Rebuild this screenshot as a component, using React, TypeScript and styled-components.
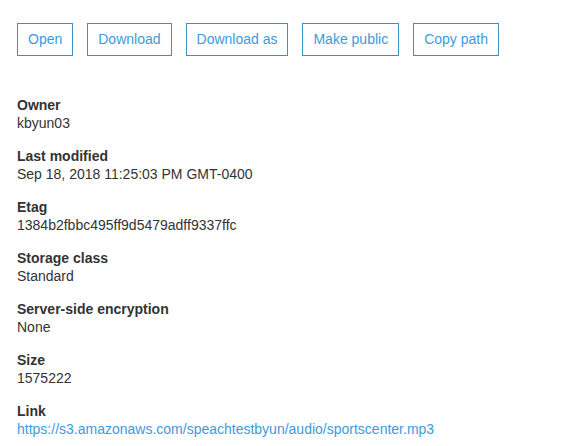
import React from "react";
import styled, { createGlobalStyle } from "styled-components";

const Global = createGlobalStyle`
  html, body { margin: 0; padding: 0; background: #fff; }
  body { font-family: "Liberation Sans", Arial, sans-serif; font-size: 14px; color: #333; }
`;

const Page = styled.div`
  padding: 23px 17px 0 17px;
`;

const Toolbar = styled.div`
  display: flex;
  gap: 14px;
  margin-bottom: 40px;
`;

const Button = styled.button`
  font-family: "Liberation Sans", Arial, sans-serif;
  font-size: 14px;
  line-height: 19px;
  padding: 6px 10px;
  background: #fff;
  color: #3d9ade;
  border: 1px solid #3a90c9;
  border-radius: 0;
  cursor: pointer;
`;

const Details = styled.dl`
  margin: 0;
`;

const Item = styled.div`
  margin-bottom: 14px;
`;

const Label = styled.dt`
  font-weight: bold;
  line-height: 18px;
  color: #333;
`;

const Value = styled.dd`
  margin: 0;
  line-height: 19px;
  color: #333;
`;

const Link = styled.a`
  color: #3d9ade;
  text-decoration: none;
`;

const buttons = ["Open", "Download", "Download as", "Make public", "Copy path"];

const items: { label: string; value: string; link?: boolean }[] = [
  { label: "Owner", value: "kbyun03" },
  { label: "Last modified", value: "Sep 18, 2018 11:25:03 PM GMT-0400" },
  { label: "Etag", value: "1384b2fbbc495ff9d5479adff9337ffc" },
  { label: "Storage class", value: "Standard" },
  { label: "Server-side encryption", value: "None" },
  { label: "Size", value: "1575222" },
  {
    label: "Link",
    value: "https://s3.amazonaws.com/speachtestbyun/audio/sportscenter.mp3",
    link: true,
  },
];

export default function App() {
  return (
    <Page>
      <Global />
      <Toolbar>
        {buttons.map((b) => (
          <Button key={b}>{b}</Button>
        ))}
      </Toolbar>
      <Details>
        {items.map((it) => (
          <Item key={it.label}>
            <Label>{it.label}</Label>
            <Value>
              {it.link ? <Link href="#">{it.value}</Link> : it.value}
            </Value>
          </Item>
        ))}
      </Details>
    </Page>
  );
}
